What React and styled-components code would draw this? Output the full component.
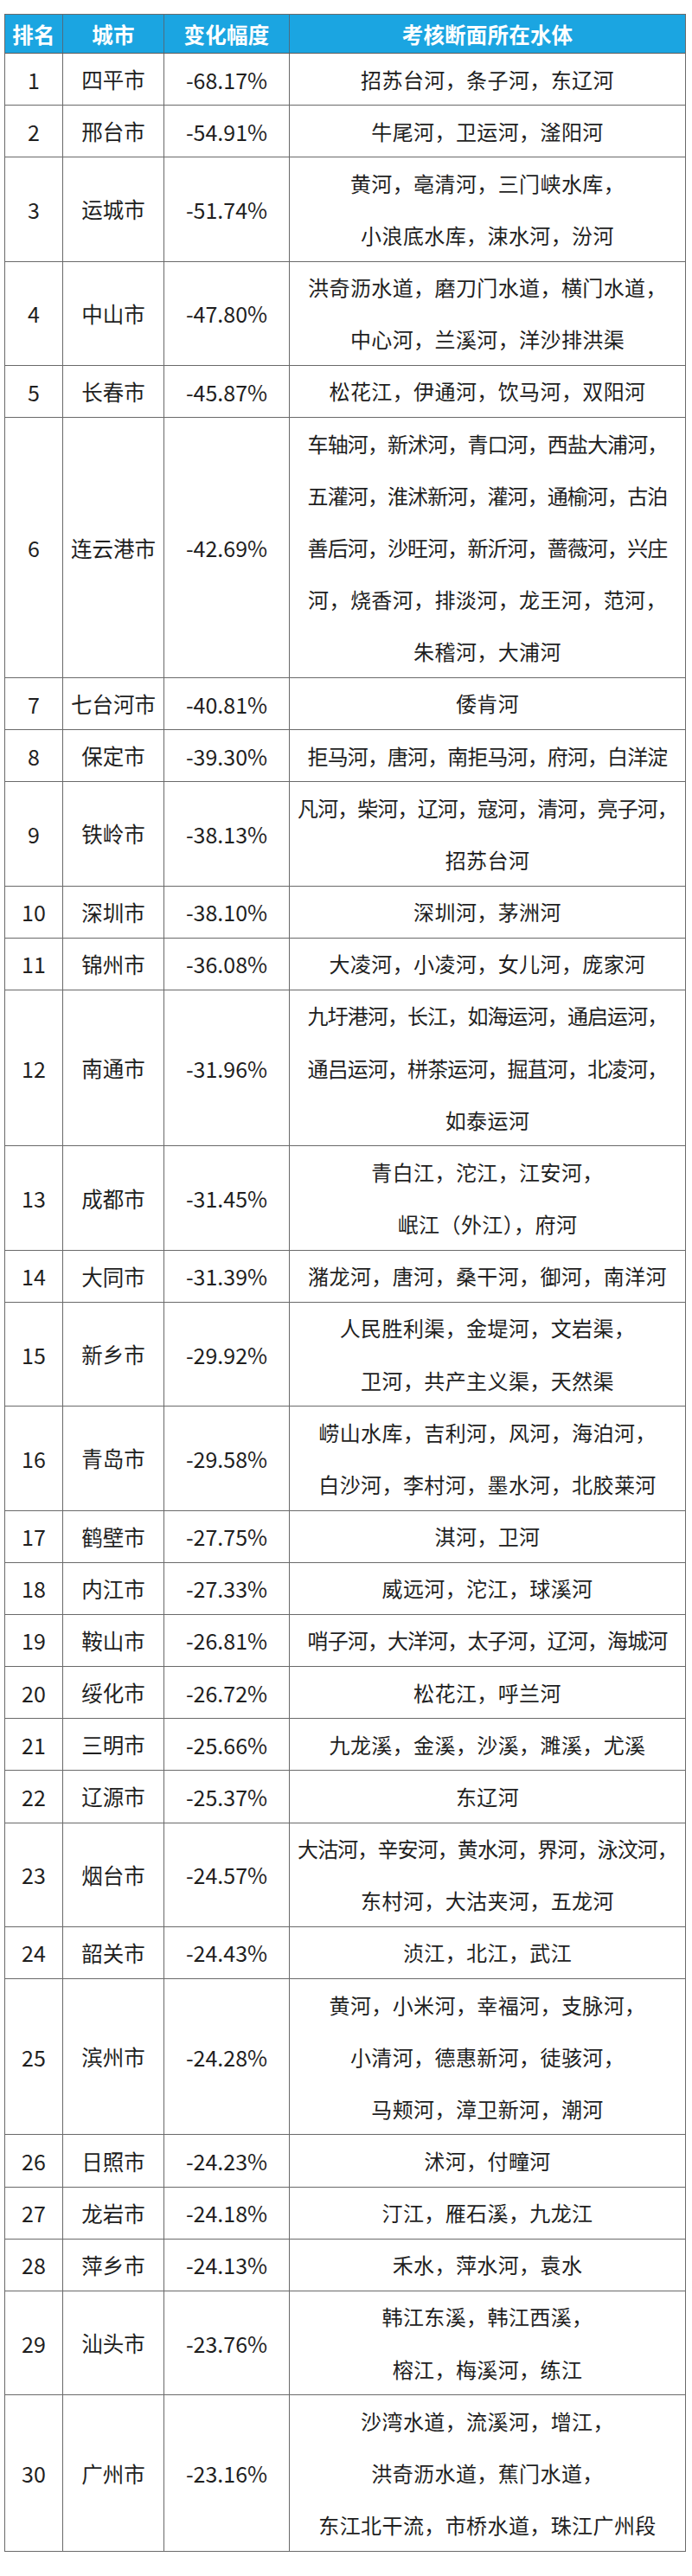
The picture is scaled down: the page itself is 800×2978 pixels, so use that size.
import styled, { createGlobalStyle } from 'styled-components';

const GlobalStyle = createGlobalStyle`
html, body {
    margin: 0;
    padding: 0;
    background: #ffffff;
}
body {
    font-family: "Noto Sans CJK SC", "Noto Sans", sans-serif;
    color: #1f1f1f;
}
`;

const LINE = 60.17;

const Page = styled.div`
padding: 16px 0 29px 5px;
`;

const Table = styled.div`
width: 788px;
border: 1px solid #6a6a6a;
border-bottom: 0;
box-sizing: border-box;
`;

const HeaderRow = styled.div`
display: grid;
grid-template-columns: 67px 117px 145px 1fr;
height: 44px;
background-color: #1ba5e1;
border-bottom: 1px solid #5a5a5a;
box-sizing: content-box;
`;

const HeaderCell = styled.div`
display: flex;
align-items: center;
justify-content: center;
color: #ffffff;
font-weight: 700;
font-size: 24.5px;
letter-spacing: 0.2px;
border-right: 1px solid #4d6d80;
&:last-child { border-right: 0; }
`;

const Row = styled.div`
display: grid;
grid-template-columns: 67px 117px 145px 1fr;
box-sizing: border-box;
border-bottom: 1px solid #6a6a6a;
height: ${p => p.$lines * LINE}px;
`;

const Cell = styled.div`
display: flex;
flex-direction: column;
align-items: center;
justify-content: center;
font-size: ${p => (p.$num ? 25 : 24.5)}px;
font-weight: 400;
border-right: 1px solid #6a6a6a;
white-space: nowrap;
overflow: hidden;
&:last-child { border-right: 0; }
`;

const Line = styled.div`
line-height: ${LINE}px;
height: ${LINE}px;
font-size: 24px;
letter-spacing: ${p => (p.$tight ? -0.9 : 0.4)}px;
`;

const rows = [
    ['四平市', '-68.17%', ['招苏台河，条子河，东辽河']],
    ['邢台市', '-54.91%', ['牛尾河，卫运河，滏阳河']],
    ['运城市', '-51.74%', ['黄河，亳清河，三门峡水库，', '小浪底水库，涑水河，汾河']],
    ['中山市', '-47.80%', ['洪奇沥水道，磨刀门水道，横门水道，', '中心河，兰溪河，洋沙排洪渠']],
    ['长春市', '-45.87%', ['松花江，伊通河，饮马河，双阳河']],
    ['连云港市', '-42.69%', [
        '车轴河，新沭河，青口河，西盐大浦河，',
        '五灌河，淮沭新河，灌河，通榆河，古泊',
        '善后河，沙旺河，新沂河，蔷薇河，兴庄',
        '河，烧香河，排淡河，龙王河，范河，',
        '朱稽河，大浦河',
    ]],
    ['七台河市', '-40.81%', ['倭肯河']],
    ['保定市', '-39.30%', ['拒马河，唐河，南拒马河，府河，白洋淀']],
    ['铁岭市', '-38.13%', ['凡河，柴河，辽河，寇河，清河，亮子河，', '招苏台河']],
    ['深圳市', '-38.10%', ['深圳河，茅洲河']],
    ['锦州市', '-36.08%', ['大凌河，小凌河，女儿河，庞家河']],
    ['南通市', '-31.96%', ['九圩港河，长江，如海运河，通启运河，', '通吕运河，栟茶运河，掘苴河，北凌河，', '如泰运河']],
    ['成都市', '-31.45%', ['青白江，沱江，江安河，', '岷江（外江），府河']],
    ['大同市', '-31.39%', ['潴龙河，唐河，桑干河，御河，南洋河']],
    ['新乡市', '-29.92%', ['人民胜利渠，金堤河，文岩渠，', '卫河，共产主义渠，天然渠']],
    ['青岛市', '-29.58%', ['崂山水库，吉利河，风河，海泊河，', '白沙河，李村河，墨水河，北胶莱河']],
    ['鹤壁市', '-27.75%', ['淇河，卫河']],
    ['内江市', '-27.33%', ['威远河，沱江，球溪河']],
    ['鞍山市', '-26.81%', ['哨子河，大洋河，太子河，辽河，海城河']],
    ['绥化市', '-26.72%', ['松花江，呼兰河']],
    ['三明市', '-25.66%', ['九龙溪，金溪，沙溪，濉溪，尤溪']],
    ['辽源市', '-25.37%', ['东辽河']],
    ['烟台市', '-24.57%', ['大沽河，辛安河，黄水河，界河，泳汶河，', '东村河，大沽夹河，五龙河']],
    ['韶关市', '-24.43%', ['浈江，北江，武江']],
    ['滨州市', '-24.28%', ['黄河，小米河，幸福河，支脉河，', '小清河，德惠新河，徒骇河，', '马颊河，漳卫新河，潮河']],
    ['日照市', '-24.23%', ['沭河，付疃河']],
    ['龙岩市', '-24.18%', ['汀江，雁石溪，九龙江']],
    ['萍乡市', '-24.13%', ['禾水，萍水河，袁水']],
    ['汕头市', '-23.76%', ['韩江东溪，韩江西溪，', '榕江，梅溪河，练江']],
    ['广州市', '-23.16%', ['沙湾水道，流溪河，增江，', '洪奇沥水道，蕉门水道，', '东江北干流，市桥水道，珠江广州段']],
];

function App() {
    return (
        <Page>
            <GlobalStyle />
            <Table>
                <HeaderRow>
                    <HeaderCell>排名</HeaderCell>
                    <HeaderCell>城市</HeaderCell>
                    <HeaderCell>变化幅度</HeaderCell>
                    <HeaderCell>考核断面所在水体</HeaderCell>
                </HeaderRow>
                {rows.map((r, i) => {
                    const [city, change, waters] = r;
                    return (
                        <Row key={i} $lines={waters.length}>
                            <Cell $num>{i + 1}</Cell>
                            <Cell>{city}</Cell>
                            <Cell $num>{change}</Cell>
                            <Cell>
                                {waters.map((w, j) => (
                                    <Line key={j} $tight={w.length >= 18}>{w}</Line>
                                ))}
                            </Cell>
                        </Row>
                    );
                })}
            </Table>
        </Page>
    );
}

export default App;
